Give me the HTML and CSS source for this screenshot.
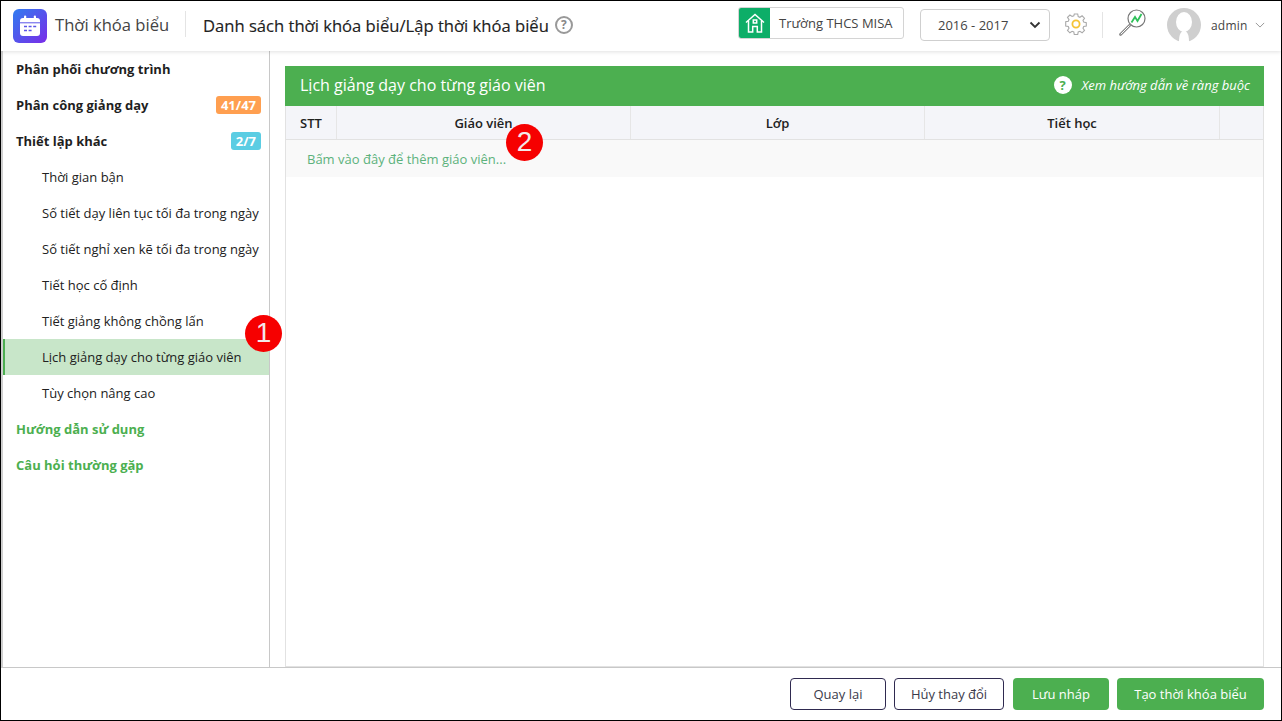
FILE: index.html
```html
<!DOCTYPE html>
<html lang="vi">
<head>
<meta charset="utf-8">
<title>Thời khóa biểu</title>
<link rel="stylesheet" href="styles.css">
</head>
<body>
<div class="app">
  <header class="topbar">
    <div class="logo">
      <svg width="22" height="22" viewBox="0 0 22 22" fill="none">
        <rect x="1" y="3" width="20" height="18" rx="3" fill="#fff"/>
        <rect x="5" y="0.5" width="2.2" height="5" rx="1" fill="#fff"/>
        <rect x="14.8" y="0.5" width="2.2" height="5" rx="1" fill="#fff"/>
        <rect x="1" y="7.3" width="20" height="1" fill="#5b55e8"/>
        <path d="M5 11.5h3M9.6 11.5h3M14.2 11.5h3M5 15.5h3M9.6 15.5h3" stroke="#5b55e8" stroke-width="1.6"/>
      </svg>
    </div>
    <div class="app-name">Thời khóa biểu</div>
    <div class="crumb">Danh sách thời khóa biểu/Lập thời khóa biểu</div>
    <div class="help-ring">?</div>
    <div class="school">
      <span class="school-icon">
        <svg width="22" height="22" viewBox="0 0 22 22" fill="none" stroke="#fff" stroke-width="1.5">
          <path d="M2 10.5 11 2.5l9 8"/>
          <path d="M4.5 9v11h4.2v-5.500h4.600V20h4.200V9"/>
          <rect x="9.300" y="8" width="3.400" height="3"/>
        </svg>
      </span>
      <span class="school-name">Trường THCS MISA</span>
    </div>
    <div class="year">
      <span>2016 - 2017</span>
      <svg width="12" height="8" viewBox="0 0 12 8" fill="none" stroke="#333" stroke-width="1.8"><path d="M1.5 1.5 6 6l4.500-4.500"/></svg>
    </div>
    <svg class="gear" width="22" height="22" viewBox="0 0 22 22" fill="none">
      <path d="M9.300 1.500h3.400l.5 2.600 1.700.7 2.200-1.500 2.400 2.400-1.500 2.200.7 1.700 2.600.5v3.400l-2.600.5-.7 1.700 1.500 2.200-2.400 2.400-2.200-1.500-1.700.7-.5 2.600H9.300l-.5-2.600-1.700-.7-2.200 1.500-2.400-2.400 1.500-2.200-.7-1.700-2.600-.5V9.300l2.600-.5.7-1.700-1.500-2.200 2.400-2.400 2.200 1.500 1.700-.7z" stroke="#a9a9a9" stroke-width="1.100" transform="translate(0 -.5)"/>
      <circle cx="11" cy="11" r="3.600" stroke="#f5c335" stroke-width="1.800"/>
    </svg>
    <div class="divider"></div>
    <svg class="search-chart" width="28" height="28" viewBox="0 0 28 28" fill="none">
      <circle cx="18.500" cy="9.500" r="8.500" stroke="#777" stroke-width="1.200"/>
      <path d="M12 16 2.500 25.500" stroke="#888" stroke-width="2.800" stroke-linecap="round"/>
      <path d="M2.800 25.200 11.500 16.500" stroke="#fff" stroke-width="1"/>
      <path d="M13.500 13.500 17 8l2.500 4 4-7" stroke="#2fc15a" stroke-width="1.800"/>
    </svg>
    <svg class="avatar" width="34" height="34" viewBox="0 0 34 34">
      <circle cx="17" cy="17" r="17" fill="#cfcfcf"/>
      <ellipse cx="17" cy="14" rx="8" ry="10" fill="#fff"/>
      <path d="M12 34c0-6 1-10 5-12 4 2 5 6 5 12z" fill="#fff"/>
    </svg>
    <span class="user">admin</span>
    <svg class="user-caret" width="10" height="6" viewBox="0 0 12 7" fill="none" stroke="#999" stroke-width="1.200"><path d="M1 1l5 5 5-5"/></svg>
  </header>

  <div class="body-row">
    <nav class="sidebar">
      <div class="nav-item head">Phân phối chương trình</div>
      <div class="nav-item head">Phân công giảng dạy <span class="badge orange">41/47</span></div>
      <div class="nav-item head">Thiết lập khác <span class="badge blue">2/7</span></div>
      <div class="nav-item sub">Thời gian bận</div>
      <div class="nav-item sub">Số tiết dạy liên tục tối đa trong ngày</div>
      <div class="nav-item sub">Số tiết nghỉ xen kẽ tối đa trong ngày</div>
      <div class="nav-item sub">Tiết học cố định</div>
      <div class="nav-item sub">Tiết giảng không chồng lấn</div>
      <div class="nav-item sub active">Lịch giảng dạy cho từng giáo viên</div>
      <div class="nav-item sub">Tùy chọn nâng cao</div>
      <div class="nav-item head green">Hướng dẫn sử dụng</div>
      <div class="nav-item head green">Câu hỏi thường gặp</div>
    </nav>
    <main class="content">
      <section class="panel">
        <div class="panel-head">
          <h1 class="panel-title">Lịch giảng dạy cho từng giáo viên</h1>
          <span class="hint-icon">?</span>
          <span class="hint">Xem hướng dẫn về ràng buộc</span>
        </div>
        <div class="grid-head">
          <div class="cell">STT</div>
          <div class="cell">Giáo viên</div>
          <div class="cell">Lớp</div>
          <div class="cell">Tiết học</div>
          <div class="cell"></div>
        </div>
        <div class="add-row">Bấm vào đây để thêm giáo viên...</div>
      </section>
    </main>
  </div>

  <footer class="footer">
    <button class="btn outline btn-back">Quay lại</button>
    <button class="btn outline btn-cancel">Hủy thay đổi</button>
    <button class="btn solid btn-save">Lưu nháp</button>
    <button class="btn solid btn-create">Tạo thời khóa biểu</button>
  </footer>

  <div class="marker marker-one">1</div>
  <div class="marker marker-two">2</div>
</div>
</body>
</html>
```
FILE: styles.css
```css
* { box-sizing: border-box; }
html, body { margin: 0; height: 100%; }
body {
  font-family: "Open Sans", sans-serif;
  font-size: 13px;
  color: #212121;
  background: #fff;
  overflow: hidden;
}
.app {
  position: relative;
  width: 1282px;
  height: 721px;
  border: 1px solid #000;
  display: flex;
  flex-direction: column;
  background: #fff;
}
.topbar {
  height: 50px;
  flex: none;
  display: flex;
  align-items: center;
  padding: 0 0 0 12px;
  background: #fff;
  box-shadow: 0 1px 4px rgba(0,0,0,.12);
  position: relative;
  z-index: 1;
}
.logo {
  width: 34px;
  height: 34px;
  border-radius: 6px;
  background: linear-gradient(135deg, #2f7cf0, #7a2ce8);
  display: flex;
  align-items: center;
  justify-content: center;
  flex: none;
}
.app-name {
  margin: 0 0 4px 8px;
  width: 131px;
  height: 26px;
  font-size: 16.600px;
  line-height: 28px;
  color: #444;
  border-right: 1px solid #e4e4e4;
  white-space: nowrap;
  flex: none;
}
.crumb {
  margin: 0 0 2px 17px;
  font-size: 16.600px;
  font-weight: 400;
  color: #212121;
  flex: none;
  -webkit-text-stroke: 0.15px #212121;
}
.help-ring {
  margin: 0 0 2px 6px;
  width: 18px;
  height: 18px;
  border: 2px solid #999;
  border-radius: 50%;
  color: #888;
  font-size: 12px;
  font-weight: 700;
  line-height: 14px;
  text-align: center;
  flex: none;
}
.school {
  margin: 0 0 6px auto;
  width: 166px;
  height: 32px;
  border: 1px solid #d4d4d4;
  border-radius: 3px;
  display: flex;
  align-items: center;
  flex: none;
  overflow: hidden;
}
.school-icon {
  width: 31px;
  height: 30px;
  background: #0dae68;
  display: flex;
  align-items: center;
  justify-content: center;
}
.school-name {
  margin-left: 9px;
  font-size: 13px;
  color: #444;
  white-space: nowrap;
}
.year {
  margin: 0 0 2px 16px;
  width: 130px;
  height: 32px;
  border: 1px solid #cfcfcf;
  border-radius: 4px;
  display: flex;
  align-items: center;
  justify-content: space-between;
  padding: 0 8px 0 17px;
  font-size: 13px;
  color: #444;
  flex: none;
}
.gear { margin: 0 0 4px 15px; flex: none; }
.divider {
  margin: 0 0 2px 15px;
  width: 1px;
  height: 26px;
  background: #e4e4e4;
  flex: none;
}
.search-chart { margin: 0 0 6px 15px; flex: none; }
.avatar { margin: 0 0 2px 21px; flex: none; }
.user {
  margin: 0 0 2px 10px;
  width: 36px;
  font-size: 12px;
  color: #444;
  letter-spacing: .2px;
  flex: none;
}
.user-caret { margin: 0 16px 2px 8px; flex: none; }

.body-row { flex: 1; display: flex; min-height: 0; }
.sidebar {
  width: 269px;
  flex: none;
  border-left: 2px solid #cfcfcf;
  border-right: 1px solid #c8c8c8;
  border-bottom: 1px solid #c8c8c8;
  background: #fff;
}
.nav-item {
  height: 36px;
  display: flex;
  align-items: center;
  justify-content: space-between;
  white-space: nowrap;
  color: #212121;
}
.head { padding: 0 8px 0 13px; font-weight: 700; color: #1f1f1f; }
.green { color: #4caf50; }
.sub { padding-left: 39px; }
.active {
  background: #c8e6c9;
  border-left: 2px solid #4caf50;
  padding-left: 37px;
}
.badge {
  height: 18px;
  padding: 0 5px;
  border-radius: 3px;
  color: #fff;
  font-size: 13px;
  font-weight: 700;
  line-height: 18px;
}
.orange { background: #ff9f50; }
.blue { background: #5bcde3; }

.content {
  flex: 1;
  min-width: 0;
  padding: 15px 17px 0 15px;
  border-bottom: 1px solid #c8c8c8;
}
.panel {
  height: 100%;
  border-left: 1px solid #e2e2e2;
  border-right: 1px solid #e2e2e2;
  border-bottom: 1px solid #e2e2e2;
}
.panel-head {
  height: 40px;
  margin: 0 -1px;
  padding: 0 14px 2px 15px;
  background: #4caf50;
  color: #fff;
  display: flex;
  align-items: center;
}
.panel-title {
  margin: 0 auto 0 0;
  font-size: 16px;
  font-weight: 400;
}
.hint-icon {
  width: 18px;
  height: 18px;
  border-radius: 50%;
  background: #fff;
  color: #4caf50;
  font-size: 13px;
  font-weight: 700;
  line-height: 18px;
  text-align: center;
  margin-right: 10px;
}
.hint { font-size: 13px; font-style: italic; }
.grid-head {
  display: grid;
  grid-template-columns: 51px 294px 294px 295px 1fr;
  height: 34px;
  background: #f4f5f9;
  border-bottom: 1px solid #e2e2e2;
  font-size: 13px;
  font-weight: 600;
  color: #212121;
}
.cell {
  display: flex;
  align-items: center;
  justify-content: center;
  padding-top: 1px;
  border-right: 1px solid #e6e6e6;
}
.cell:last-child { border-right: 0; }
.add-row {
  height: 37px;
  padding: 1px 0 0 21px;
  display: flex;
  align-items: center;
  background: #f9f9f9;
  color: #5cb27c;
  font-size: 13px;
}
.footer {
  height: 52px;
  flex: none;
  display: flex;
  align-items: flex-start;
  justify-content: flex-end;
  padding: 10px 17px 0 0;
  gap: 8px;
}
.btn {
  height: 32px;
  border-radius: 4px;
  font-family: inherit;
  font-size: 13px;
  padding: 0;
  cursor: pointer;
}
.outline { background: #fff; border: 1px solid #2f2a50; color: #3a3a4a; }
.solid { background: #4caf50; border: 0; color: #fff; }
.btn-back { width: 96px; }
.btn-cancel { width: 110px; margin-right: 1px; }
.btn-save { width: 96px; }
.btn-create { width: 147px; }
.marker {
  position: absolute;
  width: 37px;
  height: 37px;
  border-radius: 50%;
  background: #f60000;
  color: #f3e8e8;
  font-family: "Liberation Sans", sans-serif;
  font-size: 28px;
  line-height: 36px;
  text-align: center;
  z-index: 2;
}
.marker-one { left: 244px; top: 314px; }
.marker-two { left: 505px; top: 123px; }
```
